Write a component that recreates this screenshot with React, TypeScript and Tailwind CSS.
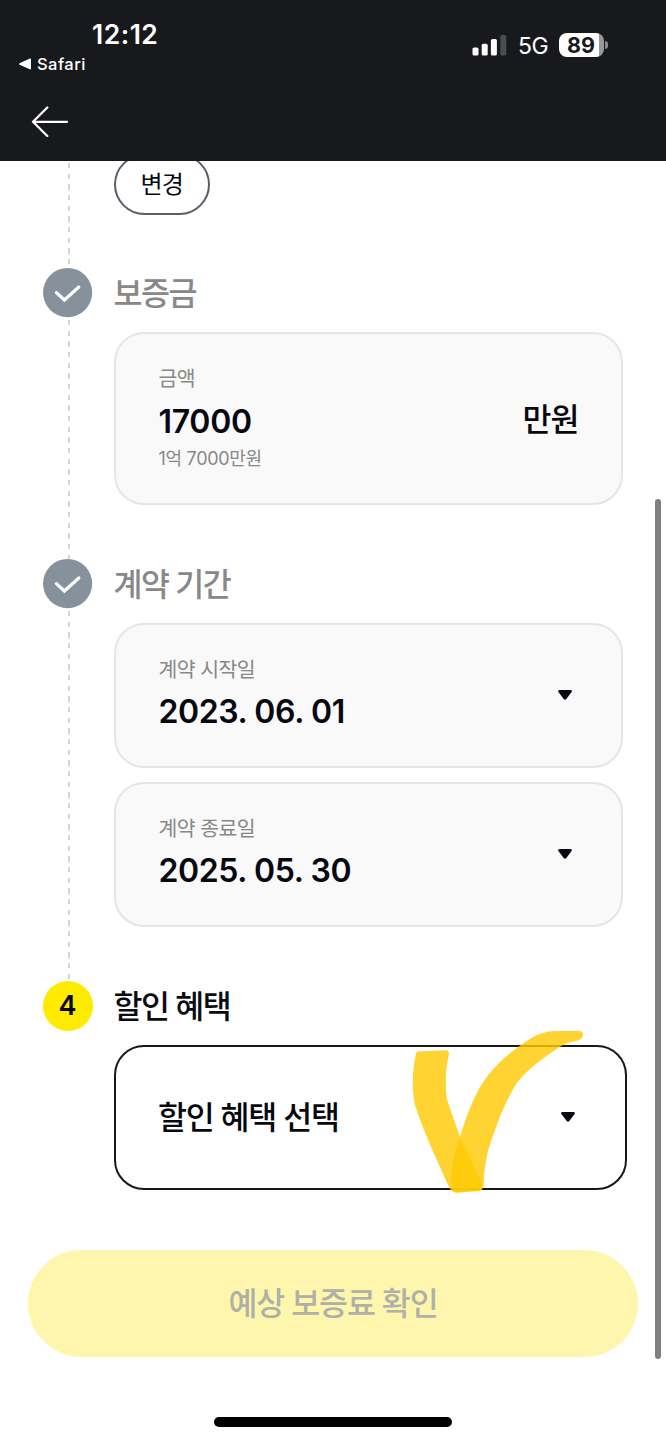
import type { ReactNode } from "react";
import clsx from "clsx";

const StatusBar = () => {
  return (
    <div className="flex justify-between h-[82px] pl-[19px] pr-[58px] text-white">
      <div className="flex flex-col">
        <span className="ml-[73px] mt-[17px] h-[34px] leading-[34px] text-[26.5px] font-semibold tracking-[0.5px]">
          12:12
        </span>
        <div className="flex items-center gap-[6px] h-6 mt-[1px]">
          <svg className="w-3 h-3" viewBox="0 0 12 12" fill="white">
            <path d="M0.6 5.2 10.8 0.6Q12 0.3 12 1.5V10.5Q12 11.7 10.8 11.3L0.6 6.8Q-.4 6 .6 5.2Z" />
          </svg>
          <span className="text-[16.5px] font-medium tracking-[0.45px]">Safari</span>
        </div>
      </div>
      <div className="flex items-center h-[24px] mt-[33px]">
        <svg className="w-[35px] h-[22px]" viewBox="0 0 35 22" fill="white">
          <rect x="0.5" y="13.5" width="6" height="8" rx="1.6" />
          <rect x="9.7" y="9.7" width="6" height="11.8" rx="1.6" />
          <rect x="18.9" y="5" width="6" height="16.5" rx="1.6" />
          <rect x="28.3" y="1" width="6" height="20.5" rx="1.6" fill="#4b4c50" />
        </svg>
        <span className="ml-[11px] w-[30px] pt-[2px] text-[23px] leading-6 tracking-[-0.6px] whitespace-nowrap">5G</span>
        <div className="ml-[11px] flex items-center justify-center w-[45px] h-6 rounded-[8px] bg-[linear-gradient(to_right,#fff_0_40px,#98999b_40px)] text-[#18191d] text-[21.5px] leading-6 font-bold">
          <span className="mr-[1px]">89</span>
        </div>
        <div className="ml-[1px] w-[3px] h-2 rounded-r-full bg-[#8b8c8f]" />
      </div>
    </div>
  );
};

const CheckCircle = () => {
  return (
    <svg className="w-[50px] h-[50px]" viewBox="0 0 50 50" fill="none">
      <circle cx="24.6" cy="24.6" r="24.6" fill="#87919b" />
      <path d="M13.4 24.6 21.4 32 35.8 19" stroke="white" strokeWidth="3.2" strokeLinecap="round" />
    </svg>
  );
};

const Caret = () => {
  return (
    <svg className="relative right-px bottom-px w-[14px] h-[10px]" viewBox="0 0 14 10" fill="#070810">
      <path d="M1.3 0H12.7Q14.6.5 13.6 2L8.3 9Q7 10.6 5.7 9L.4 2Q-.6.5 1.3 0Z" />
    </svg>
  );
};

const Rail = () => {
  return (
    <div className="flex-1 w-[2px] ml-[2px] bg-[repeating-linear-gradient(to_bottom,transparent_0_2px,#d3d5da_2px_7.3px,transparent_7.3px_10.667px)]" />
  );
};

interface StepProps {
  title: string;
  badge: ReactNode;
  active?: boolean;
  children: ReactNode;
}

const Step = ({ title, badge, active, children }: StepProps) => {
  return (
    <section className="flex gap-[21px]">
      <div className="flex-none flex flex-col items-center w-[50px]">
        {badge}
        {!active && <Rail />}
      </div>
      <div className="flex-1 min-w-0">
        <h2
          className={clsx(
            "h-[50px] leading-[50px] pt-[1px] mb-[14px] text-[31.5px] font-medium tracking-[-1.5px] whitespace-nowrap",
            active ? "text-[#0b0c12]" : "text-[#888888]"
          )}
        >
          {title}
        </h2>
        {children}
      </div>
    </section>
  );
};

const DateField = ({ label, value }: { label: string; value: string }) => {
  return (
    <button className="flex items-center justify-between w-[509.5px] h-[145px] pl-[43px] pr-[48.5px] rounded-[30px] border-2 border-[#e3e5eb] bg-[#f9f9f9] text-left">
      <span className="flex flex-col -mt-[2px] whitespace-nowrap">
        <span className="h-6 leading-6 text-[20.5px] tracking-[-0.6px] text-[#888888]">{label}</span>
        <span className="mt-[10px] h-10 leading-10 text-[32px] font-semibold tracking-[-0.4px] text-[#070810]">{value}</span>
      </span>
      <Caret />
    </button>
  );
};

// Hand-drawn highlighter mark lying over the discount field
const MarkerCheck = () => {
  return (
    <svg
      className="absolute left-[266px] top-[-35px] w-[281px] h-[200px] pointer-events-none blur-[0.7px]"
      viewBox="0 0 843 600"
      fill="#ffcb05"
      fillOpacity="0.82"
    >
      <path d="M107 134Q108 125 118 124L198 121Q207 121 207 132C200 165 194 205 200 265C212 303 227 343 240 380L306 520Q309 540 298 543L228 548Q214 546 205 527C180 470 130 365 105 285C94 235 98 180 107 134Z" />
      <path d="M240 380C262 310 285 250 316 207C350 158 410 110 460 80Q492 63 530 63L600 63Q609 65 609 76Q608 88 590 93Q560 98 540 110C490 143 445 175 412 217C378 272 357 325 342 370C328 405 313 450 311 525Q310 541 296 542L228 547Q212 545 213 500C216 455 226 420 240 380Z" />
    </svg>
  );
};

const App = () => {
  return (
    <div className="relative flex flex-col w-[666px] h-[1440px] overflow-hidden bg-white font-['Inter','Noto_Sans_CJK_KR',sans-serif] text-[#070810]">
      <header className="flex-none h-[161px] bg-[#18191d]">
        <StatusBar />
        <button className="block ml-[31px] mt-[23px]" aria-label="Back">
          <svg className="w-[38px] h-[32px]" viewBox="0 0 38 32" fill="none" stroke="white" strokeWidth="2.3" strokeLinecap="round" strokeLinejoin="round">
            <path d="M36 16.8H2M16.3 2.5 2 16.8 16.3 31" />
          </svg>
        </button>
      </header>

      <main className="flex-none flex flex-col h-[1065px] pl-[42.5px] overflow-hidden">
        <div className="flex gap-[21px] h-[107px]">
          <div className="flex flex-col items-center w-[50px]">
            <Rail />
          </div>
          <button className="-mt-[7px] w-[96.5px] h-[61px] rounded-full border-2 border-[#5a5e68] text-[24px] tracking-[-0.8px]">
            변경
          </button>
        </div>

        <Step title="보증금" badge={<CheckCircle />}>
          <div className="flex items-center justify-between w-[509.5px] h-[173px] mb-[54px] pl-[43px] pr-[42.5px] rounded-[30px] border-2 border-[#e3e5eb] bg-[#f9f9f9] whitespace-nowrap">
            <div className="flex flex-col">
              <span className="h-6 leading-6 text-[20.5px] tracking-[-0.7px] text-[#888888]">금액</span>
              <span className="mt-[11px] h-10 leading-10 text-[32px] font-semibold tracking-[-0.3px]">17000</span>
              <span className="mt-[5px] h-6 leading-6 text-[18px] tracking-[-0.3px] text-[#888888]">1억 7000만원</span>
            </div>
            <span className="pt-[3px] text-[31.5px] font-medium tracking-[-1px]">만원</span>
          </div>
        </Step>

        <Step title="계약 기간" badge={<CheckCircle />}>
          <div className="flex flex-col gap-[14px] mb-[54px]">
            <DateField label="계약 시작일" value="2023. 06. 01" />
            <DateField label="계약 종료일" value="2025. 05. 30" />
          </div>
        </Step>

        <Step
          title="할인 혜택"
          active
          badge={
            <span className="flex items-center justify-center w-[50px] h-[50px] pt-[1px] rounded-full bg-[#ffeb00] text-[27px] font-semibold">
              4
            </span>
          }
        >
          <div className="relative w-[513px]">
            <button className="flex items-center justify-between w-full h-[145px] pl-[42.5px] pr-[49px] rounded-[30px] border-2 border-[#18181c] text-[31.5px] font-medium tracking-[-1.25px] whitespace-nowrap">
              할인 혜택 선택
              <Caret />
            </button>
            <MarkerCheck />
          </div>
        </Step>
      </main>

      <footer className="flex-1 flex flex-col items-center pt-[24px]">
        <button className="w-[610px] h-[107px] pt-[1px] rounded-full bg-[#fef6ad] text-[#b0b0a8] text-[31.5px] font-medium tracking-[-1.2px]">
          예상 보증료 확인
        </button>
        <div className="mt-[60px] w-[238px] h-[10px] rounded-full bg-black" />
      </footer>

      <div className="absolute left-[655px] top-[499px] w-[6px] h-[860px] rounded-full bg-[#808080]" />
    </div>
  );
};

export default App;
